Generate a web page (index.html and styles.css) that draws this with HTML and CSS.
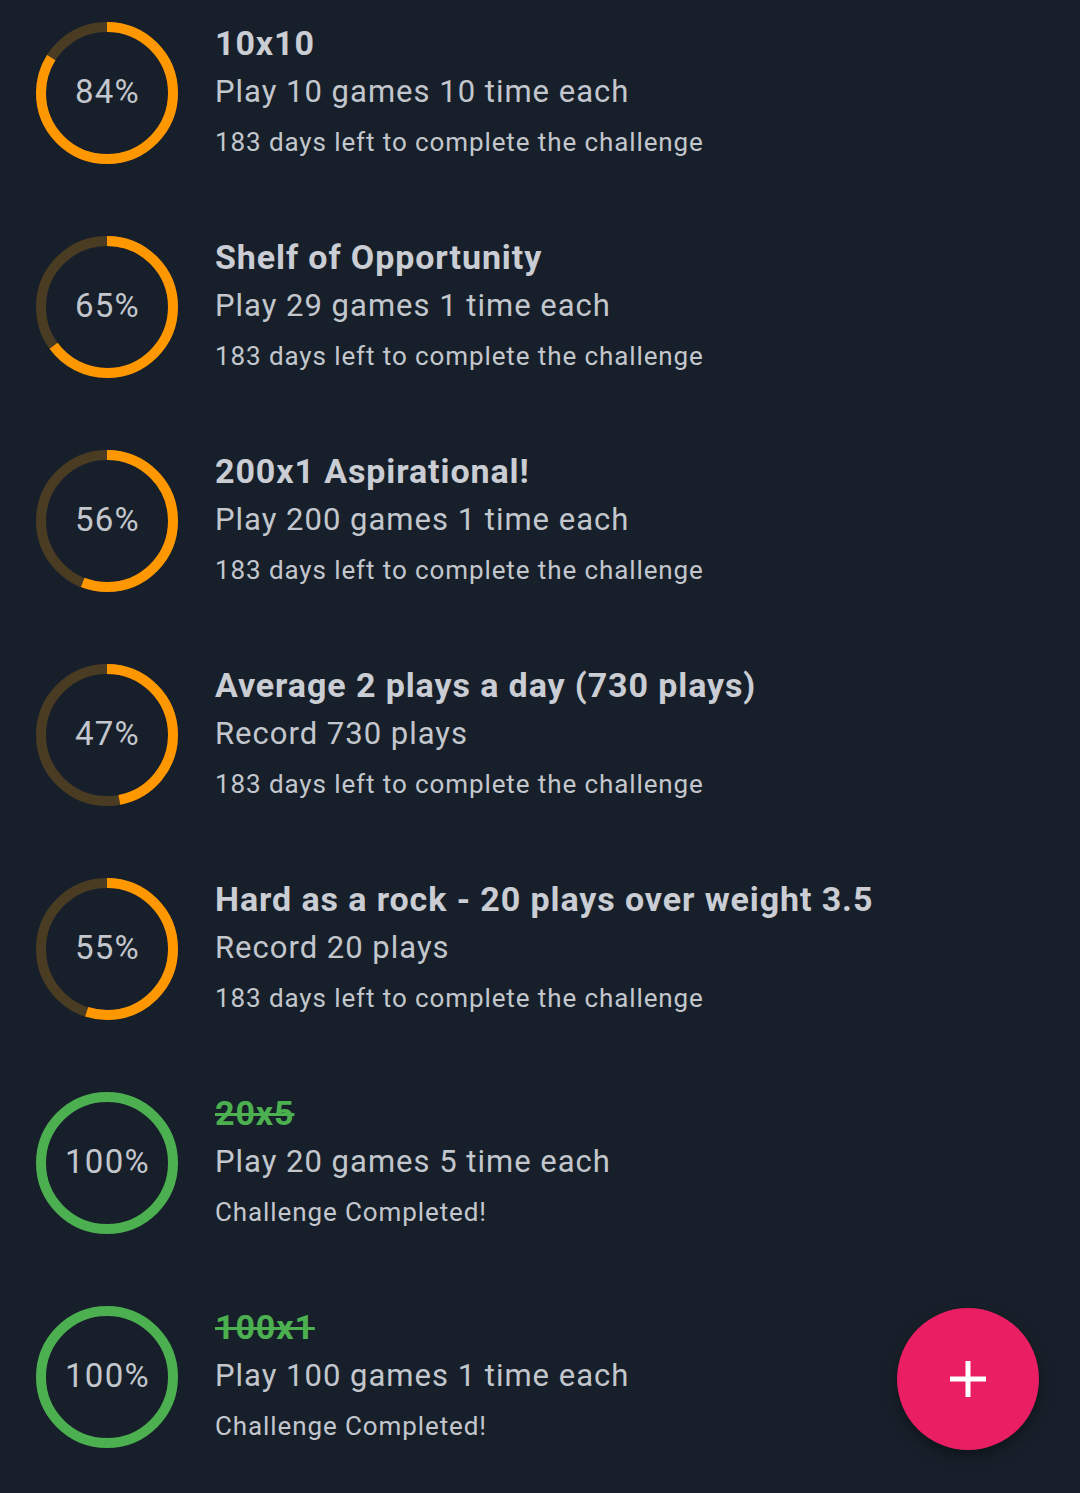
FILE: index.html
```html
<!DOCTYPE html>
<html>
<head>
    <title>Challenges</title>
    <link rel="stylesheet" href="styles.css">
</head>
<body>
    <div class="challenge-list">
        <div class="challenge">
            <div class="ring">
                <svg viewBox="0 0 142 142">
                    <circle class="track" cx="71" cy="71" r="66"></circle>
                    <circle class="bar" cx="71" cy="71" r="66" pathLength="100" stroke-dasharray="84 100"></circle>
                </svg>
                <span class="percent">84%</span>
            </div>
            <div class="info">
                <div class="title">10x10</div>
                <div class="desc">Play 10 games 10 time each</div>
                <div class="note">183 days left to complete the challenge</div>
            </div>
        </div>
        <div class="challenge">
            <div class="ring">
                <svg viewBox="0 0 142 142">
                    <circle class="track" cx="71" cy="71" r="66"></circle>
                    <circle class="bar" cx="71" cy="71" r="66" pathLength="100" stroke-dasharray="65 100"></circle>
                </svg>
                <span class="percent">65%</span>
            </div>
            <div class="info">
                <div class="title">Shelf of Opportunity</div>
                <div class="desc">Play 29 games 1 time each</div>
                <div class="note">183 days left to complete the challenge</div>
            </div>
        </div>
        <div class="challenge">
            <div class="ring">
                <svg viewBox="0 0 142 142">
                    <circle class="track" cx="71" cy="71" r="66"></circle>
                    <circle class="bar" cx="71" cy="71" r="66" pathLength="100" stroke-dasharray="56 100"></circle>
                </svg>
                <span class="percent">56%</span>
            </div>
            <div class="info">
                <div class="title">200x1 Aspirational!</div>
                <div class="desc">Play 200 games 1 time each</div>
                <div class="note">183 days left to complete the challenge</div>
            </div>
        </div>
        <div class="challenge">
            <div class="ring">
                <svg viewBox="0 0 142 142">
                    <circle class="track" cx="71" cy="71" r="66"></circle>
                    <circle class="bar" cx="71" cy="71" r="66" pathLength="100" stroke-dasharray="47 100"></circle>
                </svg>
                <span class="percent">47%</span>
            </div>
            <div class="info">
                <div class="title">Average 2 plays a day (730 plays)</div>
                <div class="desc">Record 730 plays</div>
                <div class="note">183 days left to complete the challenge</div>
            </div>
        </div>
        <div class="challenge">
            <div class="ring">
                <svg viewBox="0 0 142 142">
                    <circle class="track" cx="71" cy="71" r="66"></circle>
                    <circle class="bar" cx="71" cy="71" r="66" pathLength="100" stroke-dasharray="55 100"></circle>
                </svg>
                <span class="percent">55%</span>
            </div>
            <div class="info">
                <div class="title">Hard as a rock - 20 plays over weight 3.5</div>
                <div class="desc">Record 20 plays</div>
                <div class="note">183 days left to complete the challenge</div>
            </div>
        </div>
        <div class="challenge done">
            <div class="ring">
                <svg viewBox="0 0 142 142">
                    <circle class="bar" cx="71" cy="71" r="66"></circle>
                </svg>
                <span class="percent">100%</span>
            </div>
            <div class="info">
                <div class="title">20x5</div>
                <div class="desc">Play 20 games 5 time each</div>
                <div class="note">Challenge Completed!</div>
            </div>
        </div>
        <div class="challenge done">
            <div class="ring">
                <svg viewBox="0 0 142 142">
                    <circle class="bar" cx="71" cy="71" r="66"></circle>
                </svg>
                <span class="percent">100%</span>
            </div>
            <div class="info">
                <div class="title">100x1</div>
                <div class="desc">Play 100 games 1 time each</div>
                <div class="note">Challenge Completed!</div>
            </div>
        </div>
    </div>

    <button class="fab" type="button" aria-label="Add challenge">
        <svg viewBox="0 0 36 36" width="36" height="36">
            <path d="M18 0v36M0 18h36" stroke="#ffffff" stroke-width="5"></path>
        </svg>
    </button>
</body>
</html>
```

FILE: styles.css
```css
html, body {
    height: 100%;
}

body {
    margin: 0;
    background-color: #17202a;
    font-family: Roboto, 'Noto Sans', sans-serif;
    color: #c3c7cd;
    overflow: hidden;
}

/* list is scrolled a little, first row starts above the top edge */
.challenge-list {
    margin-top: -14px;
}

.challenge {
    display: flex;
    align-items: flex-start;
    height: 214px;
    box-sizing: border-box;
    padding: 36px 0 0 36px;
}

.ring {
    position: relative;
    width: 142px;
    height: 142px;
    flex-shrink: 0;
}

.ring svg {
    display: block;
    width: 142px;
    height: 142px;
    transform: rotate(-90deg);
}

.ring circle {
    fill: none;
    stroke-width: 10;
}

.ring .track {
    stroke: #4a3b23;
}

.ring .bar {
    stroke: #ff9800;
}

.done .ring .bar {
    stroke: #4caf50;
}

.percent {
    position: absolute;
    inset: 0;
    display: flex;
    align-items: center;
    justify-content: center;
    font-size: 33px;
    letter-spacing: 1.3px;
    padding: 0 0 4px 1px;
    color: #c3c7cd;
}

.info {
    margin-left: 37px;
    white-space: nowrap;
}

.title {
    font-size: 34px;
    font-weight: bold;
    letter-spacing: 0.9px;
    line-height: 42px;
    color: #cacdd3;
}

.done .title {
    color: #4caf50;
    text-decoration: line-through;
    text-decoration-thickness: 3px;
}

.desc {
    font-size: 31px;
    letter-spacing: 1px;
    line-height: 56px;
}

.note {
    font-size: 26px;
    letter-spacing: 0.9px;
    line-height: 44px;
}

.fab {
    position: fixed;
    right: 41px;
    bottom: 43px;
    width: 142px;
    height: 142px;
    border: none;
    border-radius: 50%;
    background-color: #e91e63;
    display: flex;
    align-items: center;
    justify-content: center;
    padding: 0;
    box-shadow: 0 6px 14px rgba(0, 0, 0, 0.4);
    cursor: pointer;
}
```
